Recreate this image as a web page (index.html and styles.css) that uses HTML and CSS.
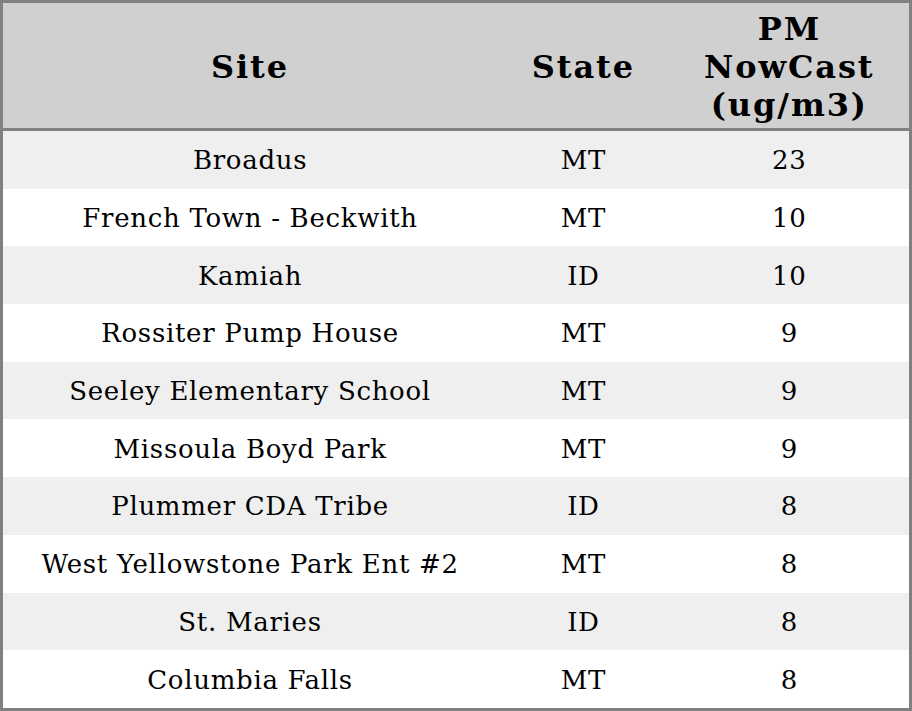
FILE: index.html
```html
<!DOCTYPE html>
<html>
<head>
<meta charset="utf-8">
<link rel="stylesheet" href="styles.css">
</head>
<body>
<table class="aq">
  <colgroup>
    <col class="c-site">
    <col class="c-state">
    <col class="c-pm">
  </colgroup>
  <thead>
    <tr><th>Site</th><th>State</th><th>PM<br>NowCast<br>(ug/m3)</th></tr>
  </thead>
  <tbody>
    <tr><td>Broadus</td><td>MT</td><td>23</td></tr>
    <tr><td>French Town - Beckwith</td><td>MT</td><td>10</td></tr>
    <tr><td>Kamiah</td><td>ID</td><td>10</td></tr>
    <tr><td>Rossiter Pump House</td><td>MT</td><td>9</td></tr>
    <tr><td>Seeley Elementary School</td><td>MT</td><td>9</td></tr>
    <tr><td>Missoula Boyd Park</td><td>MT</td><td>9</td></tr>
    <tr><td>Plummer CDA Tribe</td><td>ID</td><td>8</td></tr>
    <tr><td>West Yellowstone Park Ent #2</td><td>MT</td><td>8</td></tr>
    <tr><td>St. Maries</td><td>ID</td><td>8</td></tr>
    <tr><td>Columbia Falls</td><td>MT</td><td>8</td></tr>
  </tbody>
</table>
</body>
</html>
```
FILE: styles.css
```css
html, body {
  margin: 0;
  padding: 0;
  background: #ffffff;
}
.aq {
  width: 912px;
  height: 711px;
  border-collapse: collapse;
  border: 3px solid #808080;
  table-layout: fixed;
  font-family: "DejaVu Serif", serif;
  color: #000;
}
.c-site { width: 494px; }
.c-state { width: 172px; }
.c-pm { width: 240px; }
.aq th {
  background: #d0d0d0;
  font-size: 32px;
  font-weight: bold;
  letter-spacing: 1.9px;
  line-height: 38px;
  height: 123px;
  padding: 2px 0 0 0;
  text-align: center;
  vertical-align: middle;
  border-bottom: 3px solid #808080;
}
.aq td {
  font-size: 26px;
  letter-spacing: 0.7px;
  text-align: center;
  vertical-align: middle;
  padding: 1px 0 0 0;
  height: 56.7px;
}
.aq tbody tr:nth-child(odd) td { background: #efefef; }
.aq tbody tr:nth-child(even) td { background: #ffffff; }
```
